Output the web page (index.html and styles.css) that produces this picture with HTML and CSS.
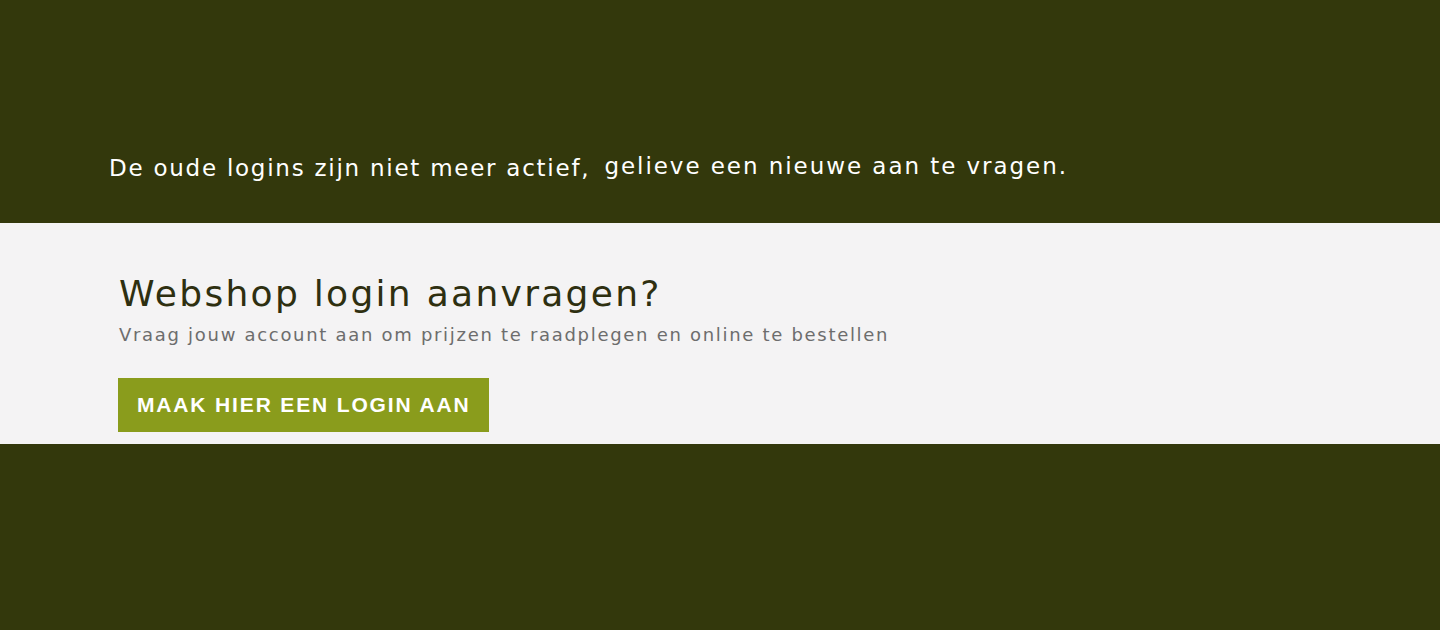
FILE: index.html
```html
<!DOCTYPE html>
<html lang="nl">
<head>
  <meta charset="UTF-8">
  <meta name="viewport" content="width=device-width, initial-scale=1.0">
  <title>Webshop login aanvragen</title>
  <link rel="stylesheet" href="styles.css">
</head>
<body>
  <section class="notice">
    <p class="notice-text">
      <span>De oude logins zijn niet meer actief,</span>
      <span class="notice-second">gelieve een nieuwe aan te vragen.</span>
    </p>
  </section>

  <section class="request">
    <h1>Webshop login aanvragen?</h1>
    <p class="subtitle">Vraag jouw account aan om prijzen te raadplegen en online te bestellen</p>
    <a href="#" class="btn-primary">Maak hier een login aan</a>
  </section>

  <div class="filler"></div>
</body>
</html>
```

FILE: styles.css
```css
:root {
  --dark-color: #33380c;
  --light-bg: #f4f3f4;
  --heading-color: #2e2f10;
  --muted-color: #6d6d6d;
  --accent-color: #8a9c1c;
}

* {
  box-sizing: border-box;
  margin: 0;
  padding: 0;
}

body {
  font-family: 'DejaVu Sans', 'Liberation Sans', Arial, sans-serif;
  background-color: var(--dark-color);
  height: 100vh;
  display: flex;
  flex-direction: column;
}

.notice {
  height: 223px;
  padding: 155px 0 0 109px;
}

.notice-text {
  color: #fff;
  font-size: 23px;
  letter-spacing: 1.75px;
  line-height: 1.2;
  white-space: nowrap;
}

.notice-second {
  position: relative;
  top: -2px;
  margin-left: 5px;
  letter-spacing: 1.95px;
}

.request {
  background-color: var(--light-bg);
  height: 221px;
  padding: 49px 0 0 119px;
  display: flex;
  flex-direction: column;
  align-items: flex-start;
}

h1 {
  color: var(--heading-color);
  font-size: 36px;
  font-weight: 400;
  letter-spacing: 2.3px;
  line-height: 1.2;
}

.subtitle {
  color: var(--muted-color);
  font-size: 18px;
  letter-spacing: 1.7px;
  line-height: 1.2;
  margin-top: 9px;
}

.btn-primary {
  margin-top: 32px;
  margin-left: -1px;
  background-color: var(--accent-color);
  color: #fff;
  font-family: 'Liberation Sans', Arial, sans-serif;
  font-weight: 700;
  font-size: 21px;
  letter-spacing: 1.85px;
  text-transform: uppercase;
  text-decoration: none;
  line-height: 54px;
  padding: 0 19px;
}

.filler {
  flex: 1;
}
```
